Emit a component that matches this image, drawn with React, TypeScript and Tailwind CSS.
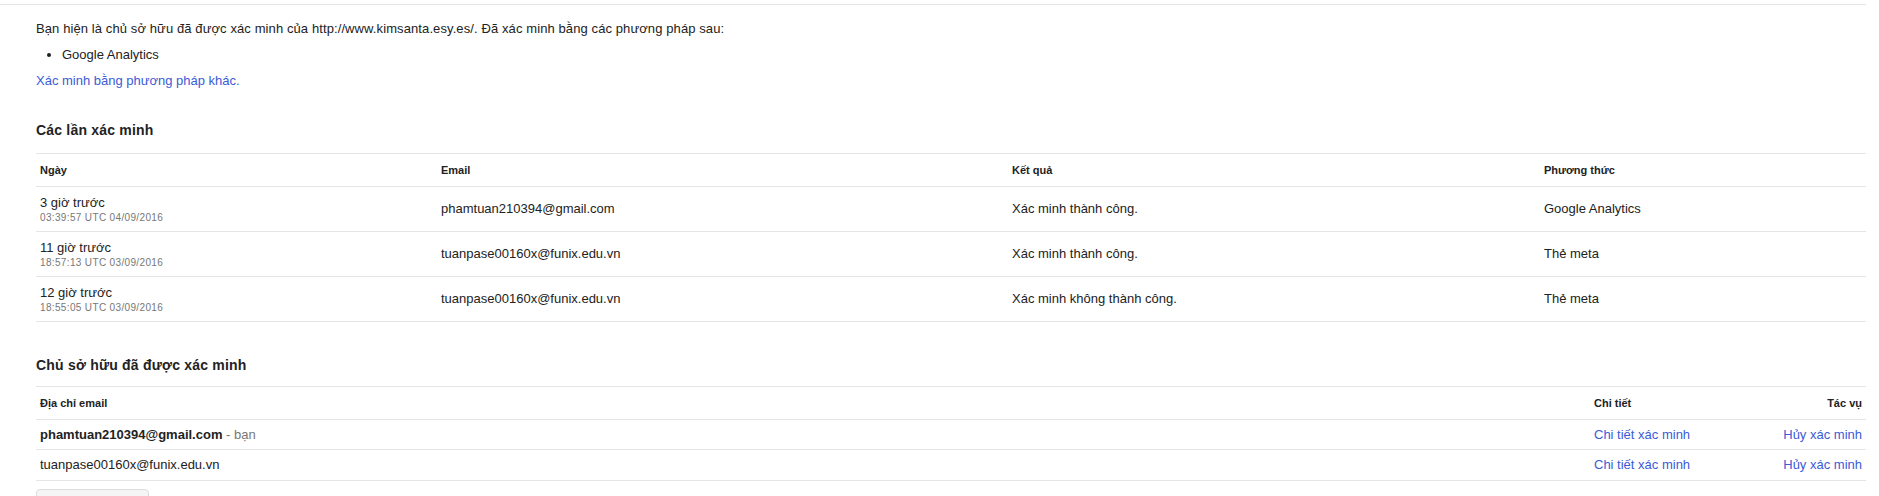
export default function App() {
  const attempts = [
    { ago: "3 giờ trước", time: "03:39:57 UTC 04/09/2016", email: "phamtuan210394@gmail.com", result: "Xác minh thành công.", method: "Google Analytics" },
    { ago: "11 giờ trước", time: "18:57:13 UTC 03/09/2016", email: "tuanpase00160x@funix.edu.vn", result: "Xác minh thành công.", method: "Thẻ meta" },
    { ago: "12 giờ trước", time: "18:55:05 UTC 03/09/2016", email: "tuanpase00160x@funix.edu.vn", result: "Xác minh không thành công.", method: "Thẻ meta" },
  ];

  return (
    <div className="pt-1 bg-white font-[Liberation_Sans,Arial,sans-serif] text-[13px] text-[#222]">
      <div className="w-[1866px] border-t border-[#e5e5e5] pl-9">
        {/* Intro */}
        <p className="mt-4 leading-4 tracking-[0.1px]">
          Bạn hiện là chủ sở hữu đã được xác minh của http://www.kimsanta.esy.es/. Đã xác minh bằng các phương pháp sau:
        </p>
        <ul className="mt-[10px] list-disc pl-[26px] leading-4">
          <li>Google Analytics</li>
        </ul>
        <a className="mt-[10px] block leading-4 text-[#3b5bd6]">Xác minh bằng phương pháp khác.</a>

        {/* Verification attempts */}
        <h2 className="mt-[33px] text-[14px] font-bold leading-[17px] tracking-[0.2px]">Các lần xác minh</h2>
        <div className="mt-[14px] border-t border-[#e5e5e5]">
          <div className="grid h-[33px] grid-cols-[401px_571px_532px_326px] items-center border-b border-[#e5e5e5] text-[11px] font-bold">
            <div className="pl-1">Ngày</div>
            <div className="pl-1">Email</div>
            <div className="pl-1">Kết quả</div>
            <div className="pl-1">Phương thức</div>
          </div>
          {attempts.map((a, i) => (
            <div key={i} className="grid h-[45px] grid-cols-[401px_571px_532px_326px] items-center border-b border-[#e5e5e5]">
              <div className="pl-1">
                <div className="leading-4">{a.ago}</div>
                <div className="mt-px text-[10px] leading-3 tracking-[0.35px] text-[#777]">{a.time}</div>
              </div>
              <div className="pl-1">{a.email}</div>
              <div className="pl-1">{a.result}</div>
              <div className="pl-1">{a.method}</div>
            </div>
          ))}
        </div>

        {/* Verified owners */}
        <h2 className="mt-[35px] text-[14px] font-bold leading-[17px] tracking-[0.2px]">Chủ sở hữu đã được xác minh</h2>
        <div className="mt-3 border-t border-[#e5e5e5]">
          <div className="grid h-[33px] grid-cols-[1554px_170px_106px] items-center border-b border-[#e5e5e5] text-[11px] font-bold">
            <div className="pl-1">Địa chỉ email</div>
            <div className="pl-1">Chi tiết</div>
            <div className="pr-1 text-right">Tác vụ</div>
          </div>
          <div className="grid h-[30px] grid-cols-[1554px_170px_106px] items-center border-b border-[#e5e5e5]">
            <div className="pl-1">
              <span className="font-bold">phamtuan210394@gmail.com</span>
              <span className="text-[#777]"> - bạn</span>
            </div>
            <a className="pl-1 text-[#3b5bd6]">Chi tiết xác minh</a>
            <a className="pr-1 text-right text-[#3b5bd6]">Hủy xác minh</a>
          </div>
          <div className="grid h-[31px] grid-cols-[1554px_170px_106px] items-center border-b border-[#e5e5e5]">
            <div className="pl-1">tuanpase00160x@funix.edu.vn</div>
            <a className="pl-1 text-[#3b5bd6]">Chi tiết xác minh</a>
            <a className="pr-1 text-right text-[#3b5bd6]">Hủy xác minh</a>
          </div>
        </div>

        <button className="mt-2 h-[29px] w-[113px] rounded-sm border border-[#dcdcdc] bg-[#f5f5f5]"></button>
      </div>
    </div>
  );
}
